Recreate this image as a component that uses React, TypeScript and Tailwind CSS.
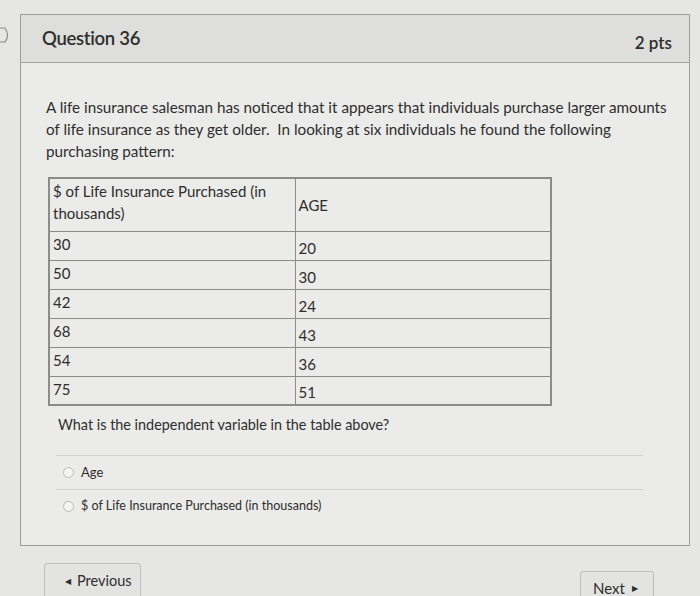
const rows = [
  ["30", "20"],
  ["50", "30"],
  ["42", "24"],
  ["68", "43"],
  ["54", "36"],
  ["75", "51"],
];

function Radio() {
  return <span className="inline-block w-[11px] h-[11px] rounded-full border border-[#b9b9b9] bg-[#f4f4f2]" />;
}

export default function App() {
  return (
    <div className="relative w-[700px] h-[596px] overflow-hidden bg-[#e6e6e4] text-[#2e2e2e] font-['Lato','Liberation_Sans',sans-serif]">
      {/* edge of the flag icon */}
      <svg className="absolute left-0 top-[27px]" width="12" height="16" viewBox="0 0 12 16">
        <path d="M-2 1 H5 Q10 8 5 15 H-2" fill="none" stroke="#8a8a8a" strokeWidth="1.2" />
      </svg>

      <div className="ml-[20px] mt-[14px] w-[670px] h-[532px] border border-[#9d9d9b] bg-[#ebebe9] flex flex-col">
        {/* header */}
        <div className="h-[48px] px-[21px] flex items-center justify-between bg-[#dededc] border-b border-[#a3a3a1]">
          <span className="text-[18.5px] font-semibold tracking-[-0.3px]">Question 36</span>
          <span className="text-[17px] font-semibold mt-[8px] mr-[-4px]">2 pts</span>
        </div>

        {/* body */}
        <div className="pl-[25px] pt-[33px] flex flex-col">
          <p className="w-[624px] text-[15.25px] leading-[22px]">
            A life insurance salesman has noticed that it appears that individuals purchase larger amounts of life insurance as they get older.&nbsp; In looking at six individuals he found the following purchasing pattern:
          </p>

          <table className="mt-[15px] ml-[2px] w-[504px] border-collapse border-2 border-[#8c8c8a] text-[15px] leading-[22px]">
            <tbody>
              <tr className="h-[53px]">
                <td className="w-[246px] border border-[#8c8c8a] px-[3px] align-top pt-[1px]">
                  $ of Life Insurance Purchased (in thousands)
                </td>
                <td className="border border-[#8c8c8a] px-[3px]">AGE</td>
              </tr>
              {rows.map(([a, b]) => (
                <tr key={a} className="h-[29px]">
                  <td className="border border-[#8c8c8a] px-[3px] align-top pt-[1px]">{a}</td>
                  <td className="border border-[#8c8c8a] px-[3px] align-bottom pb-[1px]">{b}</td>
                </tr>
              ))}
            </tbody>
          </table>

          <p className="mt-[8px] ml-[12px] text-[14.4px] leading-[22px]">What is the independent variable in the table above?</p>

          <div className="mt-[19px] ml-[10px] w-[587px] border-t border-[#d2d2d0]">
            <div className="h-[34px] flex items-center gap-[7px] pl-[7px] text-[13px] border-b border-[#d2d2d0]">
              <Radio />
              <span>Age</span>
            </div>
            <div className="h-[32px] flex items-center gap-[7px] pl-[7px] text-[12.5px]">
              <Radio />
              <span>$ of Life Insurance Purchased (in thousands)</span>
            </div>
          </div>
        </div>
      </div>

      {/* nav buttons */}
      <div className="flex items-start justify-between mt-[17px] pl-[44px] pr-[46px]">
        <button className="w-[97px] h-[40px] flex items-start pt-[6px] pl-[20px] gap-[6px] bg-[#e3e3e1] border border-[#bdbdbb] rounded-[3px] text-[14.5px]">
          <span className="text-[8px] mt-[5px]">◀</span>
          <span>Previous</span>
        </button>
        <button className="mt-[8px] w-[74px] h-[40px] flex items-start pt-[5px] pl-[12px] gap-[7px] bg-[#e3e3e1] border border-[#bdbdbb] rounded-[3px] text-[15px]">
          <span>Next</span>
          <span className="text-[8px] mt-[5px]">▶</span>
        </button>
      </div>
    </div>
  );
}
